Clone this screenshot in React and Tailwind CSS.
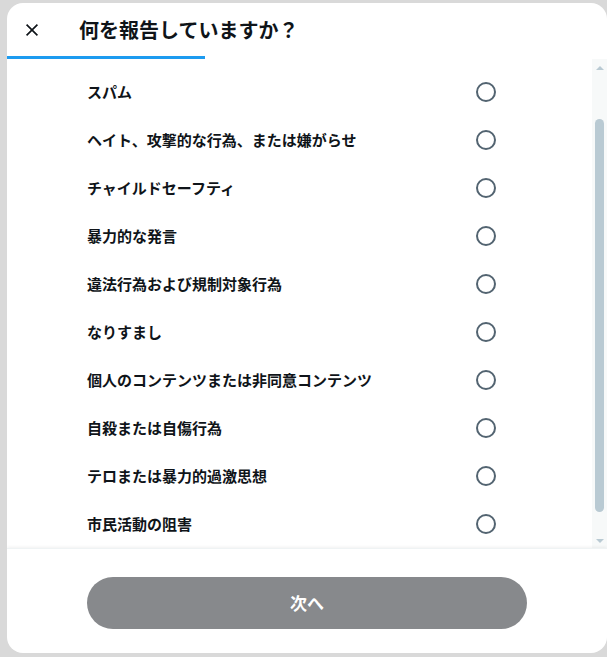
import React from "react";

const REASONS = [
  "スパム",
  "ヘイト、攻撃的な行為、または嫌がらせ",
  "チャイルドセーフティ",
  "暴力的な発言",
  "違法行為および規制対象行為",
  "なりすまし",
  "個人のコンテンツまたは非同意コンテンツ",
  "自殺または自傷行為",
  "テロまたは暴力的過激思想",
  "市民活動の阻害",
];

const font = { fontFamily: '"Noto Sans CJK JP", "Noto Sans", sans-serif' };

const Radio = () => (
  <span className="block w-5 h-5 rounded-full border-2 border-[#536471] bg-white" />
);

const ReasonRow = ({ label }) => (
  <div className="flex items-center justify-between h-12 pl-[80px] pr-[96px]">
    <span className="text-[15px] font-bold text-[#0f1419] leading-5">{label}</span>
    <Radio />
  </div>
);

const FakeScrollbar = () => (
  <div className="w-[15px] shrink-0 bg-[#f7f9f9] flex flex-col items-center">
    <div className="mt-[7px] w-0 h-0 border-l-[4px] border-r-[4px] border-b-[4px] border-l-transparent border-r-transparent border-b-[#b9cad3]" />
    <div className="mt-[49px] w-[9px] h-[393px] rounded-full bg-[#b9cad3]" />
    <div className="mt-[27px] w-0 h-0 border-l-[4px] border-r-[4px] border-t-[4px] border-l-transparent border-r-transparent border-t-[#b9cad3]" />
  </div>
);

export default function App() {
  return (
    <div className="w-[607px] h-[657px] bg-[#d9d9d9] pt-[3px] pl-[7px] overflow-hidden" style={font}>
      <div className="w-[600px] h-[650px] bg-white rounded-2xl overflow-hidden flex flex-col">
        {/* header */}
        <div className="relative h-[56px] shrink-0 flex items-center pl-[15px] pb-[3px]">
          <button className="w-5 h-5 flex items-center justify-center text-[#0f1419]">
            <svg viewBox="0 0 24 24" className="w-5 h-5" fill="none" stroke="currentColor" strokeWidth="2">
              <path d="M5.5 5.5l13 13M18.5 5.5l-13 13" />
            </svg>
          </button>
          <h1 className="ml-[37px] text-[20px] font-bold text-[#0f1419] leading-6">何を報告していますか？</h1>
          <div className="absolute left-0 bottom-0 w-[198px] h-[3px] bg-[#1d9bf0]" />
        </div>

        {/* list */}
        <div className="flex h-[489px] shrink-0">
          <div className="flex-1 pt-[9px]">
            {REASONS.map((r) => (
              <ReasonRow key={r} label={r} />
            ))}
          </div>
          <FakeScrollbar />
        </div>

        {/* footer */}
        <div className="flex-1 border-t border-[#eff3f4] shadow-[0_-1px_3px_rgba(0,0,0,0.06)] px-[80px] pt-[28px]">
          <button className="w-full h-[52px] rounded-full bg-[#87898c] text-white text-[17px] font-bold">
            次へ
          </button>
        </div>
      </div>
    </div>
  );
}
